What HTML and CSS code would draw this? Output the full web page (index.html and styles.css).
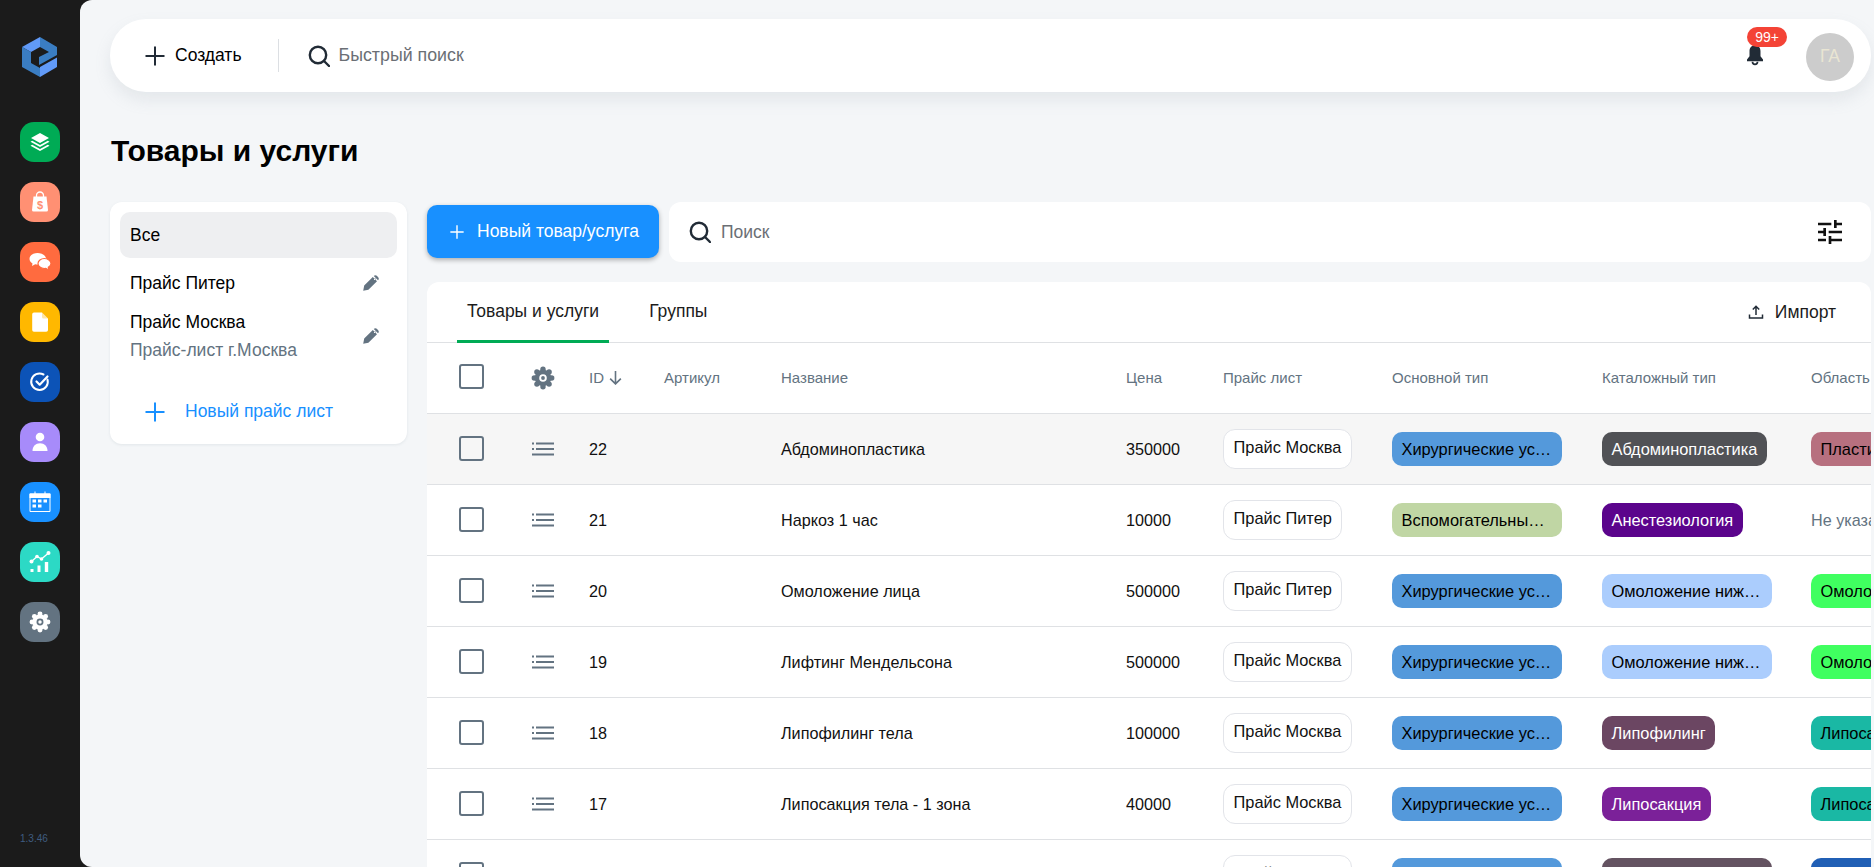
FILE: index.html
```html
<!DOCTYPE html>
<html lang="ru">
<head>
<meta charset="utf-8">
<title>Товары и услуги</title>
<link rel="stylesheet" href="styles.css">
</head>
<body>
<svg class="defs" width="0" height="0">
  <symbol id="i-plus" viewBox="0 0 20 20"><path d="M10 0.500v19M0.500 10h19" fill="none" stroke="currentColor" stroke-width="2"/></symbol>
  <symbol id="i-search" viewBox="0 0 22 22"><circle cx="10" cy="10" r="8.200" fill="none" stroke="currentColor" stroke-width="2.400"/><path d="M16 16l5 5" stroke="currentColor" stroke-width="2.400" stroke-linecap="round"/></symbol>
  <symbol id="i-pencil" viewBox="0 0 18 18"><path fill="currentColor" fill-rule="evenodd" d="M1.200 16.800l1-5.200L10.800 3l4.200 4.200-8.600 8.600zM12 1.800c.8-.8 2-.8 2.800 0l1.400 1.400c.8.800.8 2 0 2.800l-.2.200-4.200-4.200zM12.700 4.300a.9.9 0 1 0 1 1 .9.900 0 0 0-1-1z"/></symbol>
  <symbol id="i-lines" viewBox="0 0 22 14"><path d="M0 1.500h2M4 1.500h18M0 7h2M4 7h18M0 12.500h22" fill="none" stroke="currentColor" stroke-width="2"/></symbol>
  <symbol id="i-gear" viewBox="0 0 24 24"><g fill="currentColor"><circle cx="12" cy="12" r="8.300"/><circle cx="12" cy="3.300" r="2.700"/><circle cx="12" cy="20.700" r="2.700"/><circle cx="3.300" cy="12" r="2.700"/><circle cx="20.700" cy="12" r="2.700"/><circle cx="5.900" cy="5.900" r="2.700"/><circle cx="18.100" cy="5.900" r="2.700"/><circle cx="5.900" cy="18.100" r="2.700"/><circle cx="18.100" cy="18.100" r="2.700"/></g><circle class="gear-ring" cx="12" cy="12" r="3.800"/><circle cx="12" cy="12" r="1.900" fill="currentColor"/></symbol>
</svg>

<div class="app">
  <aside class="rail">
    <svg class="logo" viewBox="22 37 36 40" width="36" height="40">
      <polygon fill="#619af8" points="22,47 40,37 40,47 31,52"/>
      <polygon fill="#3a7dc2" points="22,47 31,52 31,63 40,68 40,77 22,67"/>
      <polygon fill="#3a7dc2" points="40,37 57,47 57,55 39,65 39,57 49,52 40,47"/>
      <polygon fill="#619af8" points="40,67 57,57.500 57,67 40,77"/>
    </svg>
    <nav class="rail-nav">
      <a class="app-icon green"><svg viewBox="0 0 24 24" width="24" height="24"><path fill="#fff" d="M12 3l9 5-9 5-9-5zM4.200 10.700L12 15l7.800-4.300 1.700 1L12 17 2.500 11.700zM4.200 14.700L12 19l7.800-4.300 1.700 1L12 21 2.500 15.700z"/></svg></a>
      <a class="app-icon salmon"><svg viewBox="0 0 24 24" width="24" height="24"><path fill="none" stroke="#fff" stroke-width="1.300" d="M8.500 7V5.500a3.500 3.500 0 0 1 7 0V7"/><path fill="#fff" d="M5.500 6.500h13l1.500 13.500a1.500 1.500 0 0 1-1.500 1.500h-13A1.500 1.500 0 0 1 4 20z"/><text x="12" y="18.500" text-anchor="middle" class="bag-sign">$</text></svg></a>
      <a class="app-icon orange"><svg viewBox="0 0 24 24" width="24" height="24"><path fill="#fff" d="M9.500 3C5.400 3 1.500 5.300 1.500 8.800c0 2 1.200 3.600 3 4.700L4 16l3.200-1.700c.9.200 1.800.3 2.800.3 3.500 0 8-2.300 8-5.800S13.600 3 9.500 3z"/><path fill="#fff" stroke="#ff6b3f" stroke-width="1.200" d="M16.300 8.500c-3.300 0-6.300 2.100-6.300 5s3 5 6.300 5c.5 0 1 0 1.500-.2l3 1.700-.5-2.700c1.500-.9 2.700-2.300 2.700-3.800 0-2.900-3.400-5-6.700-5z"/></svg></a>
      <a class="app-icon yellow"><svg viewBox="0 0 24 24" width="24" height="24"><path fill="#fff" d="M6 2.500h8l6 6V20a1.800 1.800 0 0 1-1.800 1.800H6A1.800 1.800 0 0 1 4.200 20V4.300A1.800 1.800 0 0 1 6 2.500z"/><path fill="#ffb800" d="M14 2.500v4.500a1.500 1.500 0 0 0 1.500 1.500H20z" opacity=".35"/></svg></a>
      <a class="app-icon navy"><svg viewBox="0 0 24 24" width="24" height="24"><path fill="none" stroke="#fff" stroke-width="2" stroke-linecap="round" d="M19.500 9.500A8.300 8.300 0 1 1 15.500 4.500"/><path fill="none" stroke="#fff" stroke-width="2.200" stroke-linecap="round" stroke-linejoin="round" d="M8.500 11.500l3.200 3.200 7.800-8.200"/></svg></a>
      <a class="app-icon violet"><svg viewBox="0 0 24 24" width="24" height="24"><circle cx="12" cy="7" r="4.300" fill="#fff"/><path fill="#fff" d="M4.500 21c0-4.800 3.200-7.800 7.500-7.800s7.500 3 7.500 7.800z"/></svg></a>
      <a class="app-icon blue"><svg viewBox="0 0 24 24" width="24" height="24"><path fill="#fff" d="M6.500 1.500h1V4h-1zM16.500 1.500h1V4h-1z"/><path fill="#fff" d="M1.500 3.500h21V8h-21z"/><path fill="none" stroke="#fff" d="M2 4h20v17.500H2z"/><path fill="#fff" d="M4.500 9.500h3.500v3H4.500zM10 9.500h3.500v3H10zM15.500 9.500H19v3h-3.500zM4.500 14.500h3.500v3H4.500zM10 14.500h3.500v3H10z"/></svg></a>
      <a class="app-icon teal"><svg viewBox="0 0 24 24" width="24" height="24"><path fill="#fff" d="M2.500 19h3v3h-3zM9.500 15.500h3V22h-3zM16.800 12h3.400v10h-3.400z"/><path fill="none" stroke="#fff" stroke-width="1.400" d="M3.500 11.500l5.500-5 4.500 2.500 7-6"/><g fill="#fff"><circle cx="3.500" cy="11.500" r="2"/><circle cx="9" cy="6.500" r="1.800"/><circle cx="13.500" cy="9" r="1.800"/><circle cx="20.500" cy="3" r="2"/></g></svg></a>
      <a class="app-icon slate"><svg class="gear-rail" width="22" height="22"><use href="#i-gear"/></svg></a>
    </nav>
    <span class="version">1.3.46</span>
  </aside>

  <main class="main">
    <header class="topbar">
      <a class="create"><svg class="i20" width="20" height="20"><use href="#i-plus"/></svg><span>Создать</span></a>
      <span class="vdiv"></span>
      <div class="quick"><svg class="i22" width="22" height="22"><use href="#i-search"/></svg><span>Быстрый поиск</span></div>
      <div class="top-right">
        <div class="bell">
          <svg viewBox="1.500 2.500 21 21" width="24" height="24"><path fill="#212b36" d="M12 4.500c-3 0-4.800 2.200-4.800 5.200v4.300L5 17v1.500h14V17l-2.200-3V9.700c0-3-1.800-5.200-4.800-5.200z"/><path fill="none" stroke="#212b36" stroke-width="1.500" d="M9.800 19a2.200 2.200 0 0 0 4.400 0"/></svg>
          <span class="badge">99+</span>
        </div>
        <div class="avatar">ГА</div>
      </div>
    </header>

    <h1 class="page-title">Товары и услуги</h1>

    <div class="content">
      <section class="lists">
        <div class="list-item selected"><span class="li-name">Все</span></div>
        <div class="list-item single">
          <span class="li-name">Прайс Питер</span>
          <svg class="pencil" width="18" height="18"><use href="#i-pencil"/></svg>
        </div>
        <div class="list-item double">
          <div><div class="li-name">Прайс Москва</div><div class="li-sub">Прайс-лист г.Москва</div></div>
          <svg class="pencil" width="18" height="18"><use href="#i-pencil"/></svg>
        </div>
        <a class="new-list"><svg width="20" height="20"><use href="#i-plus"/></svg><span>Новый прайс лист</span></a>
      </section>

      <section class="catalog">
        <div class="toolbar">
          <button class="primary"><svg width="14" height="14"><use href="#i-plus"/></svg><span>Новый товар/услуга</span></button>
          <div class="search">
            <svg class="i22" width="22" height="22"><use href="#i-search"/></svg>
            <span class="search-text">Поиск</span>
            <svg class="tune" viewBox="0 0 24 24" width="32" height="32"><path fill="#111" d="M3 17v2h6v-2H3zM3 5v2h10V5H3zm10 16v-2h8v-2h-8v-2h-2v6h2zM7 9v2H3v2h4v2h2V9H7zm14 4v-2H11v2h10zm-6-4h2V7h4V5h-4V3h-2v6z"/></svg>
          </div>
        </div>

        <div class="panel">
          <div class="tabs">
            <a class="tab active">Товары и услуги</a>
            <a class="tab">Группы</a>
            <a class="import"><svg viewBox="0 0 16 16" width="16" height="16"><path fill="none" stroke="#212b36" stroke-width="1.500" d="M1.500 10.500v3.500h13v-3.500M8 11V2.500M4.800 5.500L8 2.300l3.200 3.200"/></svg><span>Импорт</span></a>
          </div>

          <div class="row head">
            <span class="box"></span>
            <svg class="gear-head" width="24" height="24"><use href="#i-gear"/></svg>
            <span class="sort">ID <svg viewBox="0 0 14 14" width="15" height="15"><path fill="none" stroke="#637381" stroke-width="1.500" d="M7 1v11.500M2 8l5 5 5-5"/></svg></span>
            <span>Артикул</span><span>Название</span><span>Цена</span><span>Прайс лист</span><span>Основной тип</span><span>Каталожный тип</span><span>Область</span>
          </div>

          <div class="row hover">
            <span class="box"></span><svg class="lines" width="22" height="14"><use href="#i-lines"/></svg>
            <span>22</span><span></span><span>Абдоминопластика</span><span>350000</span>
            <span><b class="price-tag">Прайс Москва</b></span>
            <span><b class="tag t-surg">Хирургические услуги</b></span>
            <span><b class="tag t-abdo">Абдоминопластика</b></span>
            <span><b class="tag t-plast">Пластическая хирургия</b></span>
          </div>
          <div class="row">
            <span class="box"></span><svg class="lines" width="22" height="14"><use href="#i-lines"/></svg>
            <span>21</span><span></span><span>Наркоз 1 час</span><span>10000</span>
            <span><b class="price-tag">Прайс Питер</b></span>
            <span><b class="tag t-help">Вспомогательные услуги</b></span>
            <span><b class="tag t-anes">Анестезиология</b></span>
            <span class="muted">Не указано</span>
          </div>
          <div class="row">
            <span class="box"></span><svg class="lines" width="22" height="14"><use href="#i-lines"/></svg>
            <span>20</span><span></span><span>Омоложение лица</span><span>500000</span>
            <span><b class="price-tag">Прайс Питер</b></span>
            <span><b class="tag t-surg">Хирургические услуги</b></span>
            <span><b class="tag t-lower">Омоложение нижней трети</b></span>
            <span><b class="tag t-young">Омоложение</b></span>
          </div>
          <div class="row">
            <span class="box"></span><svg class="lines" width="22" height="14"><use href="#i-lines"/></svg>
            <span>19</span><span></span><span>Лифтинг Мендельсона</span><span>500000</span>
            <span><b class="price-tag">Прайс Москва</b></span>
            <span><b class="tag t-surg">Хирургические услуги</b></span>
            <span><b class="tag t-lower">Омоложение нижней трети</b></span>
            <span><b class="tag t-young">Омоложение</b></span>
          </div>
          <div class="row">
            <span class="box"></span><svg class="lines" width="22" height="14"><use href="#i-lines"/></svg>
            <span>18</span><span></span><span>Липофилинг тела</span><span>100000</span>
            <span><b class="price-tag">Прайс Москва</b></span>
            <span><b class="tag t-surg">Хирургические услуги</b></span>
            <span><b class="tag t-lipo">Липофилинг</b></span>
            <span><b class="tag t-area">Липосакция</b></span>
          </div>
          <div class="row">
            <span class="box"></span><svg class="lines" width="22" height="14"><use href="#i-lines"/></svg>
            <span>17</span><span></span><span>Липосакция тела - 1 зона</span><span>40000</span>
            <span><b class="price-tag">Прайс Москва</b></span>
            <span><b class="tag t-surg">Хирургические услуги</b></span>
            <span><b class="tag t-suct">Липосакция</b></span>
            <span><b class="tag t-area">Липосакция</b></span>
          </div>
          <div class="row">
            <span class="box"></span><svg class="lines" width="22" height="14"><use href="#i-lines"/></svg>
            <span>16</span><span></span><span></span><span></span>
            <span><b class="price-tag">Прайс Москва</b></span>
            <span><b class="tag t-surg">Хирургические услуги</b></span>
            <span><b class="tag t-last">Маммопластика</b></span>
            <span><b class="tag t-deep">Маммопластика</b></span>
          </div>
        </div>
      </section>
    </div>
  </main>
</div>
</body>
</html>
```
FILE: styles.css
```css
* { box-sizing: border-box; }
html, body { margin: 0; height: 100%; overflow: hidden; }
body { background: #1b1b1b; font-family: "Liberation Sans", Arial, sans-serif; color: #000; font-size: 17.500px; }
.defs { position: absolute; }
svg { display: block; flex: none; }

.app { display: flex; height: 867px; }

/* rail */
.rail { width: 80px; flex: none; display: flex; flex-direction: column; align-items: center; padding-top: 37px; }
.logo { flex: none; }
.rail-nav { display: flex; flex-direction: column; gap: 20px; margin-top: 45px; }
.app-icon { width: 40px; height: 40px; border-radius: 14px; display: flex; align-items: center; justify-content: center; }
.green { background: #00ab55; }
.salmon { background: #ff9073; }
.orange { background: #ff6b3f; }
.yellow { background: #ffb800; }
.navy { background: #0c53b7; }
.violet { background: #a78bfa; }
.blue { background: #1890ff; }
.teal { background: #2cd9c5; }
.slate { background: #637381; }
.gear-ring { fill: var(--ring, #fff); }
.gear-rail { color: #fff; --ring: #637381; }
.bag-sign { font: bold 11px "Liberation Sans", sans-serif; fill: #ff9073; }
.version { align-self: flex-start; margin: auto 0 23px 20px; font-size: 10px; color: #3f5c80; }

/* main */
.main { flex: 1; min-width: 0; height: 867px; background: #f4f6f8; border-radius: 12px 0 0 12px; padding: 19px 3px 0 30px; overflow: hidden; }

.topbar { height: 73px; background: #fff; border-radius: 36px; box-shadow: 0 8px 16px rgba(145,158,171,.16); display: flex; align-items: center; padding: 0 17px 0 35px; }
.create { display: flex; align-items: center; gap: 10px; color: #000; }
.i20 { color: #212b36; }
.vdiv { width: 1px; height: 33px; background: #dcdfe3; margin: 0 29px 0 36px; }
.quick { display: flex; align-items: center; gap: 9px; color: #6b6f75; font-size: 17.800px; }
.i22 { color: #212b36; }
.top-right { margin-left: auto; display: flex; align-items: center; gap: 39px; }
.bell { position: relative; width: 24px; height: 24px; margin-top: -2px; }
.badge { position: absolute; left: 4px; top: -16px; width: 40px; height: 20px; border-radius: 10px; background: #f44336; color: #fff; font-size: 14px; line-height: 20px; text-align: center; }
.avatar { width: 48px; height: 48px; border-radius: 50%; background: #ccc; color: #e9e5d3; display: flex; align-items: center; justify-content: center; font-size: 17.500px; margin-top: 2px; }

.page-title { margin: 0 0 0 1px; height: 110px; padding-top: 41px; font-size: 30px; line-height: 36px; font-weight: 700; }

.content { display: flex; gap: 20px; align-items: flex-start; }

/* left lists */
.lists { width: 297px; flex: none; height: 242px; background: #fff; border-radius: 12px; padding: 10px; box-shadow: 0 1px 3px rgba(145,158,171,.18); }
.list-item { display: flex; align-items: center; justify-content: space-between; padding: 0 10px; }
.list-item.selected { height: 46px; background: #eeeff1; border-radius: 10px; }
.list-item.single { height: 50px; }
.list-item.double { height: 62px; margin-top: -3px; }
.li-sub { color: #637381; margin-top: 7px; }
.pencil { color: #637381; margin-right: 7px; }
.new-list { display: flex; align-items: center; gap: 20px; padding-left: 25px; margin-top: 34px; color: #1890ff; }

/* right */
.catalog { flex: 1; min-width: 0; }
.toolbar { display: flex; align-items: flex-start; gap: 10px; height: 60px; }
.primary { width: 232px; height: 53px; border: 0; border-radius: 10px; background: #1890ff; color: #fff; font: 17.500px "Liberation Sans", Arial, sans-serif; display: flex; align-items: center; gap: 13px; padding: 0 0 0 23px; box-shadow: 0 2px 5px rgba(0,0,0,.3); margin-top: 3px; }
.search { flex: 1; height: 60px; background: #fff; border-radius: 12px; display: flex; align-items: center; padding: 0 25px 0 20px; }
.search-text { margin-left: 10px; color: #6b6f75; }
.tune { margin-left: auto; }

.panel { margin-top: 20px; background: #fff; border-radius: 12px 12px 0 0; overflow: hidden; height: 600px; }
.tabs { height: 61px; display: flex; align-items: stretch; border-bottom: 1px solid #dfe1e4; padding-left: 30px; position: relative; }
.tab { display: flex; align-items: center; padding: 0 10px; margin-right: 30px; color: #1c1c1c; margin-bottom: -1px; border-bottom: 3px solid transparent; padding-top: 1px; }
.tab.active { border-bottom-color: #00ab55; }
.import { margin-left: auto; display: flex; align-items: center; gap: 11px; margin-right: 35px; color: #1c1c1c; }

.row { display: grid; grid-template-columns: 103px 59px 75px 117px 345px 97px 169px 210px 209px 200px; align-items: center; height: 71px; border-bottom: 1px solid #dfe1e4; font-size: 16.200px; color: #111; width: 1584px; white-space: nowrap; }
.row.hover { background: #f6f6f6; }
.row.head { color: #637381; font-size: 15px; padding-bottom: 1px; }
.row > span > b { font-size: 16.400px; }
.box { width: 25px; height: 25px; border: 2px solid #637381; border-radius: 3px; margin: -2px 0 0 32px; }
.gear-head { color: #637381; margin-left: 1px; }
.lines { color: #637381; margin-left: 2px; }
.sort { display: flex; align-items: center; gap: 4px; }
.price-tag, .tag { display: inline-block; font-weight: 400; vertical-align: middle; }
.price-tag { height: 40px; line-height: 35px; border: 1.500px solid #e2e4e9; border-radius: 12px; padding: 0 9.500px; background: #fff; color: #111; }
.tag { height: 34px; line-height: 34px; border-radius: 10px; padding: 0 9.500px; max-width: 170px; overflow: hidden; text-overflow: ellipsis; color: #000; }
.muted { color: #637381; }
.t-surg { background: #5499db; }
.t-abdo { background: #515256; color: #fff; }
.t-plast { background: #b7707f; max-width: 220px; }
.t-help { background: #c0d6a4; }
.t-anes { background: #5b048c; color: #fff; }
.t-lower { background: #abcdfd; }
.t-young { background: #40ff60; }
.t-lipo { background: #6b4662; color: #fff; }
.t-area { background: #1ab8a4; }
.t-suct { background: #7b2199; color: #fff; }
.t-last { background: #645361; color: #fff; width: 170px; }
.t-deep { background: #205fb5; color: #fff; }
```
